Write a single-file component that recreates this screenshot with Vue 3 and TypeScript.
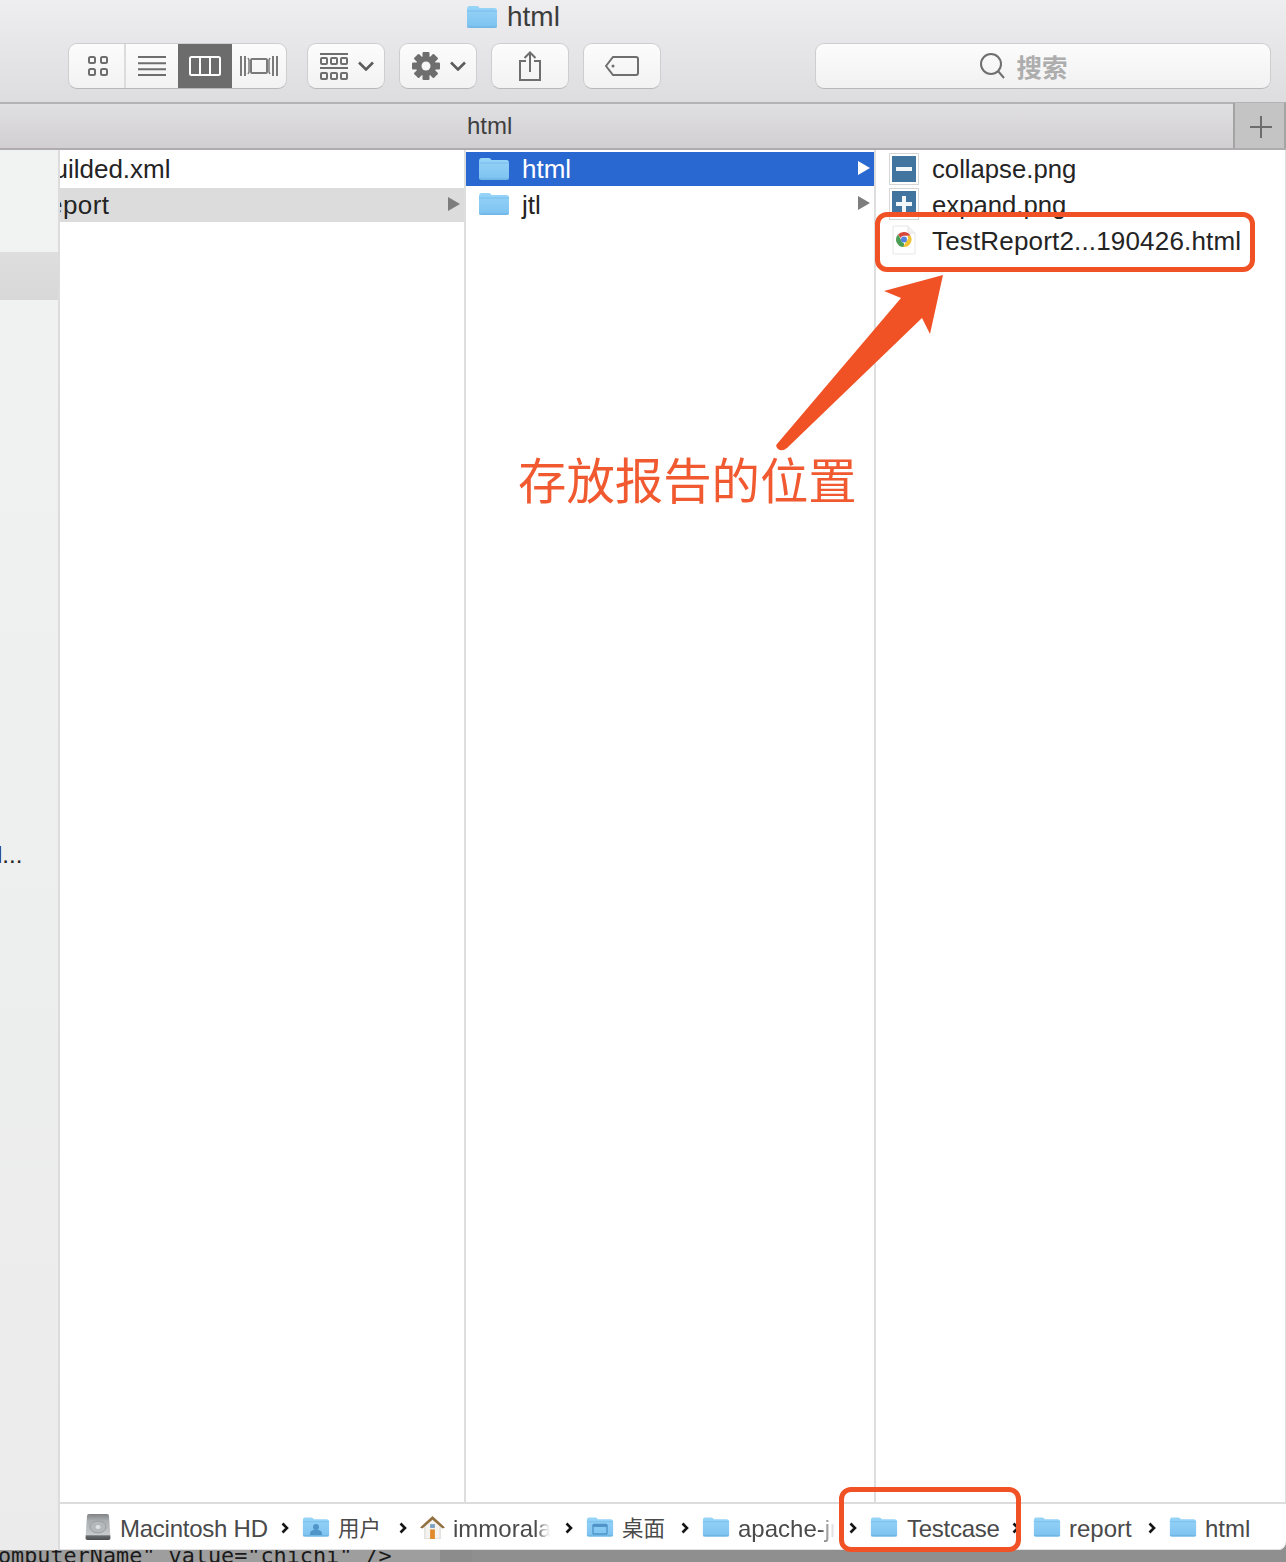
<script setup lang="ts">
interface Crumb { label: string; kind: 'hd' | 'user' | 'home' | 'desk' | 'folder'; width: number; clip?: boolean; cjk?: boolean; tight?: boolean }
const crumbs: Crumb[] = [
  { label: 'Macintosh HD', kind: 'hd', width: 217, tight: true },
  { label: '用户', kind: 'user', width: 118, cjk: true },
  { label: 'immorala', kind: 'home', width: 166, clip: true },
  { label: '桌面', kind: 'desk', width: 116, cjk: true },
  { label: 'apache-jmeter', kind: 'folder', width: 168, clip: true },
  { label: 'Testcase', kind: 'folder', width: 163, tight: true },
  { label: 'report', kind: 'folder', width: 136 },
  { label: 'html', kind: 'folder', width: 90 }
]
const gearTeeth = [0, 45, 90, 135]
</script>

<template>
  <div class="page">
    <header class="toolbar">
      <div class="title">
        <svg class="folder" width="32" height="24" viewBox="0 0 32 24"><use href="#fld" /></svg>
        <span>html</span>
      </div>
      <div class="tools">
        <div class="btn seg">
          <div class="cell c1">
            <svg width="22" height="22" viewBox="0 0 22 22" fill="none" stroke="#6e6e6e" stroke-width="2"><rect x="2" y="2" width="6" height="6" rx="1.500"/><rect x="14" y="2" width="6" height="6" rx="1.500"/><rect x="2" y="14" width="6" height="6" rx="1.500"/><rect x="14" y="14" width="6" height="6" rx="1.500"/></svg>
          </div>
          <div class="cell c2">
            <svg width="28" height="20" viewBox="0 0 28 20" stroke="#6e6e6e" stroke-width="2"><path d="M0 1h28M0 7.300h28M0 13.300h28M0 19h28"/></svg>
          </div>
          <div class="cell c3">
            <svg width="34" height="22" viewBox="0 0 34 22" fill="none" stroke="#fff" stroke-width="2"><rect x="2" y="2" width="30" height="18" rx="1.500"/><path d="M12 2v18M22 2v18"/></svg>
          </div>
          <div class="cell c4">
            <svg width="38" height="22" viewBox="0 0 38 22" fill="none" stroke="#7a7a7a" stroke-width="2"><path d="M1 1v20M5 1v20M33 1v20M37 1v20"/><rect x="11" y="4" width="16" height="14" rx="1"/><path d="M8 3l1 2v12l-1 2M30 3l-1 2v12l1 2" stroke-width="1.500"/></svg>
          </div>
        </div>
        <div class="btn b78 drop">
          <svg width="28" height="27" viewBox="0 0 28 27" fill="none" stroke="#6e6e6e" stroke-width="2"><path d="M0 1h28M0 15h28"/><rect x="1" y="5" width="6" height="6" rx="1"/><rect x="11" y="5" width="6" height="6" rx="1"/><rect x="21" y="5" width="6" height="6" rx="1"/><rect x="1" y="20" width="6" height="6" rx="1"/><rect x="11" y="20" width="6" height="6" rx="1"/><rect x="21" y="20" width="6" height="6" rx="1"/></svg>
          <svg class="chev" width="16" height="10" viewBox="0 0 16 10" fill="none" stroke="#5c5c5c" stroke-width="2.600"><path d="M1 1.500l7 7 7-7"/></svg>
        </div>
        <div class="btn b78 drop">
          <svg width="28" height="28" viewBox="0 0 28 28" fill="#6e6e6e">
            <rect v-for="a in gearTeeth" :key="a" x="10.500" y="0" width="7" height="28" rx="1" :transform="`rotate(${a} 14 14)`" />
            <circle cx="14" cy="14" r="10" />
            <circle cx="14" cy="14" r="4.500" fill="#f6f6f6" />
          </svg>
          <svg class="chev" width="16" height="10" viewBox="0 0 16 10" fill="none" stroke="#5c5c5c" stroke-width="2.600"><path d="M1 1.500l7 7 7-7"/></svg>
        </div>
        <div class="btn b78">
          <svg width="22" height="30" viewBox="0 0 22 30" fill="none" stroke="#6e6e6e" stroke-width="2"><path d="M7 10H1v19h20V10h-6"/><path d="M11 21V2M5.500 7L11 1.500 16.500 7"/></svg>
        </div>
        <div class="btn b78">
          <svg width="34" height="20" viewBox="0 0 34 20" fill="none" stroke="#6e6e6e" stroke-width="2"><path d="M8 1h23a2 2 0 0 1 2 2v14a2 2 0 0 1-2 2H8l-7-9z"/><circle cx="8" cy="10" r="1.500" fill="#6e6e6e" stroke="none"/></svg>
        </div>
        <div class="search">
          <svg width="26" height="28" viewBox="0 0 26 28" fill="none" stroke="#6f6f6f" stroke-width="2"><circle cx="11" cy="12" r="10"/><path d="M18 19l6 7"/></svg>
          <span>搜索</span>
        </div>
      </div>
    </header>

    <div class="tabbar">
      <span class="tabname">html</span>
      <div class="plus">
        <svg width="22" height="22" viewBox="0 0 22 22" stroke="#6d6d6d" stroke-width="2"><path d="M11 0v22M0 11h22"/></svg>
      </div>
    </div>

    <div class="body">
      <aside class="sidebar">
        <div class="side-sel"></div>
        <div class="side-text">l...</div>
      </aside>
      <div class="right">
        <main class="browser">
          <section class="col col1">
            <div class="row plain first"><span class="clip-l">builded.xml</span></div>
            <div class="row gray"><span class="clip-l wide">report</span><i class="tri gray-tri"></i></div>
          </section>
          <section class="col col2">
            <div class="row blue first">
              <svg class="folder" width="32" height="24" viewBox="0 0 32 24"><use href="#fld" /></svg>
              <span>html</span><i class="tri white-tri"></i>
            </div>
            <div class="row plain">
              <svg class="folder" width="32" height="24" viewBox="0 0 32 24"><use href="#fld" /></svg>
              <span>jtl</span><i class="tri gray-tri"></i>
            </div>
          </section>
          <section class="col col3">
            <div class="row plain first">
              <div class="png"><i class="hbar"></i></div>
              <span class="fname">collapse.png</span>
            </div>
            <div class="row plain">
              <div class="png"><i class="hbar"></i><i class="vbar"></i></div>
              <span class="fname">expand.png</span>
            </div>
            <div class="row plain">
              <svg class="doc" width="24" height="30" viewBox="0 0 24 30">
                <path d="M1 1h15l7 7v21H1z" fill="#fff" stroke="#e6e6e6"/>
                <path d="M16 1v7h7" fill="#f2f2f2" stroke="#e6e6e6"/>
                <path d="M12 7a7.500 7.500 0 0 1 6.500 3.750H12a3.750 3.750 0 0 0-3.400 2.200L6 9.500A7.500 7.500 0 0 1 12 7z" fill="#d8473c"/>
                <path d="M6 9.500l3.300 5.700a3.750 3.750 0 0 0 2.700 3.300V22A7.500 7.500 0 0 1 6 9.500z" fill="#4a9d55"/>
                <path d="M18.500 10.750A7.500 7.500 0 0 1 11 21.900l3.300-5.700a3.750 3.750 0 0 0 .9-5.450z" fill="#f1c232"/>
                <circle cx="12" cy="14.500" r="3" fill="#5283e0"/>
              </svg>
              <span class="long">TestReport2...190426.html</span>
            </div>
          </section>
        </main>

        <footer class="pathbar">
          <div v-for="(c, i) in crumbs" :key="i" class="crumb" :style="{ width: c.width + 'px' }">
            <svg v-if="c.kind === 'hd'" class="ci" width="26" height="28" viewBox="0 0 26 28">
              <defs><linearGradient id="hdg" x1="0" y1="0" x2="0" y2="1"><stop offset="0" stop-color="#7f8386"/><stop offset="0.25" stop-color="#a9adaf"/><stop offset="0.82" stop-color="#c9cbcd"/><stop offset="0.83" stop-color="#6a6d6f"/><stop offset="1" stop-color="#4d5052"/></linearGradient></defs>
              <path d="M4 1h18q2 0 2 2l1.500 22q0 2-2 2h-21q-2 0-2-2L2 3q0-2 2-2z" fill="url(#hdg)"/>
              <ellipse cx="13" cy="14" rx="8" ry="6" fill="#b4b8ba" stroke="#9b9ea0"/>
              <ellipse cx="13" cy="14" rx="2.500" ry="2" fill="#dfe1e2"/>
            </svg>
            <svg v-else-if="c.kind === 'home'" class="ci" width="25" height="24" viewBox="0 0 26 25">
              <path d="M5 11v14h16V11L13 4z" fill="#f4f3ef" stroke="#bbb" stroke-width="0.600"/>
              <path d="M0 13L13 1l13 12-2.500 1L13 5 2.500 14z" fill="#93703f"/>
              <rect x="10.500" y="15" width="5" height="10" fill="#e08a2c"/>
              <rect x="10.500" y="9.500" width="5" height="4" fill="#7da0c0"/>
            </svg>
            <svg v-else class="folder ci" width="28" height="22" viewBox="0 0 32 24">
              <use href="#fld" />
              <g v-if="c.kind === 'user'" fill="#4f95c8"><circle cx="16" cy="12" r="3.500"/><path d="M9 21c0-5 3-6 7-6s7 1 7 6z"/></g>
              <rect v-if="c.kind === 'desk'" x="8" y="9" width="16" height="11" rx="1" fill="none" stroke="#4f95c8" stroke-width="1.600"/>
              <rect v-if="c.kind === 'desk'" x="8" y="9" width="16" height="3" fill="#4f95c8"/>
            </svg>
            <span class="clabel" :class="{ fade: c.clip, cjk: c.cjk, tight: c.tight }">{{ c.label }}</span>
            <svg v-if="i < crumbs.length - 1" class="sep" width="8" height="12" viewBox="0 0 8 12" fill="none" stroke="#141414" stroke-width="2.600"><path d="M1.500 1.500L6 6l-4.500 4.500"/></svg>
          </div>
        </footer>
      </div>
    </div>

    <div class="under">
      <span class="code">omputerName" value="chichi" /&gt;</span>
    </div>

    <div class="mark mark-file"></div>
    <div class="mark mark-crumb"></div>
    <svg class="arrow" width="180" height="190" viewBox="0 0 180 190">
      <path fill="#f15225" d="M168 3L155 62 147 46 12 176Q7 180 3 177 0 174 2 172L126 26 109 19z"/>
    </svg>
    <div class="note">存放报告的位置</div>

    <svg width="0" height="0" class="defs">
      <defs>
        <linearGradient id="fg" x1="0" y1="0" x2="0" y2="1"><stop offset="0" stop-color="#97d4f8"/><stop offset="1" stop-color="#7cc2f0"/></linearGradient>
        <g id="fld">
          <path d="M1 4.500Q1 1 3.500 1H11q1.500 0 2.500 2h15Q31 3 31 6v15q0 2-2.500 2h-25Q1 23 1 21z" fill="url(#fg)"/>
          <path d="M1 6h30" stroke="#6fb6e8" stroke-width="1" opacity="0.700"/>
          <path d="M1 22h30" stroke="#5ca2d4" stroke-width="1" opacity="0.600"/>
        </g>
      </defs>
    </svg>
  </div>
</template>

<style scoped>
.page {
  position: relative;
  width: 1286px;
  height: 1562px;
  overflow: hidden;
  font-family: "Liberation Sans", Arial, "Noto Sans CJK SC", sans-serif;
  font-size: 26px;
  color: #242424;
  background: #fff;
}
.toolbar {
  box-sizing: border-box;
  height: 104px;
  background: linear-gradient(#eeedef, #dddcde);
  border-bottom: 2px solid #b4b2b4;
}
.title {
  height: 33px;
  display: flex;
  align-items: center;
  gap: 9px;
  padding-left: 466px;
  font-size: 28px;
  color: #3c3c3c;
}
.tools {
  display: flex;
  padding: 10px 15px 0 68px;
  align-items: flex-start;
}
.btn {
  box-sizing: border-box;
  height: 46px;
  background: linear-gradient(#fcfcfc, #f2f2f2);
  border: 1px solid #cfcdcf;
  border-bottom-color: #b9b7b9;
  border-radius: 9px;
  display: flex;
  align-items: center;
  justify-content: center;
  flex: none;
  margin-right: 14px;
}
.seg { width: 219px; overflow: hidden; justify-content: flex-start; margin-right: 20px; }
.cell { height: 100%; display: flex; align-items: center; justify-content: center; flex: none; }
.c1 { width: 55px; border-right: 2px solid #dcdcdc; padding-left: 3px; box-sizing: border-box; width: 57px; }
.c2 { width: 52px; }
.c3 { width: 54px; background: #6c6c6c; padding-right: 1px; box-sizing: border-box; }
.c4 { width: 54px; }
.b78 { width: 78px; gap: 10px; }
.drop { padding-left: 2px; }
.search {
  box-sizing: border-box;
  flex: none;
  width: 456px;
  height: 46px;
  margin-left: 140px;
  padding-right: 38px;
  background: linear-gradient(#fcfcfc, #f1f1f1);
  border: 1px solid #cfcdcf;
  border-bottom-color: #b9b7b9;
  border-radius: 9px;
  display: flex;
  align-items: center;
  justify-content: center;
  gap: 10px;
  font-size: 25.500px;
  line-height: 30px;
  color: #adadad;
  font-family: "Noto Sans CJK SC", sans-serif;
  font-weight: 700;
}
.tabbar {
  box-sizing: border-box;
  height: 46px;
  background: linear-gradient(#e0dfe1, #d1cfd2);
  border-bottom: 2px solid #aeacae;
  position: relative;
  display: flex;
  align-items: center;
  padding-left: 467px;
  font-size: 24px;
  color: #3f3f3f;
}
.plus {
  position: absolute;
  right: 0;
  top: -1px;
  width: 53px;
  height: 45px;
  box-sizing: border-box;
  padding: 2px 0 0 3px;
  background: #c4c4c5;
  border-left: 2px solid #a4a3a4;
  border-right: 2px solid #a4a3a4;
  display: flex;
  align-items: center;
  justify-content: center;
}
.body {
  display: flex;
  height: 1400px;
  background: #8f8f8f;
}
.sidebar {
  box-sizing: border-box;
  width: 60px;
  flex: none;
  position: relative;
  background: linear-gradient(#f1f2f2, #ebebeb);
  border-right: 2px solid #dcdcdc;
}
.side-sel { position: absolute; left: 0; top: 102px; width: 58px; height: 48px; background: linear-gradient(#dedede, #d8d8d8); }
.side-text { position: absolute; left: -3px; top: 691px; font-size: 24px; line-height: 28px; }
.right { flex: 1; display: flex; flex-direction: column; min-width: 0; }
.browser {
  flex: 1;
  display: flex;
  background: #fff;
  min-height: 0;
}
.col { box-sizing: border-box; flex: none; padding-top: 2px; border-right: 2px solid #dedede; }
.col1 { width: 406px; }
.col2 { width: 410px; }
.col3 { flex: 1; border-right: 1px solid #dedede; }
.row {
  position: relative;
  height: 36px;
  display: flex;
  align-items: center;
  gap: 12px;
  padding: 0 0 0 12px;
  white-space: nowrap;
  overflow: hidden;
}
.row.first { height: 34px; }
.row span { position: relative; top: 1px; }
.row.first span { top: 0; }
.col1 .row { padding-left: 0; }
.col1 .gray { height: 34px; margin-top: 2px; background: #dcdcdc; }
.col1 .gray span { top: 0; }
.clip-l { display: block; margin-left: -21px; flex: none; }
.clip-l.wide { letter-spacing: 0.400px; }
.blue { background: #2a68d1; color: #fff; }
.tri { position: absolute; right: 4px; top: 50%; margin-top: -8px; width: 0; height: 0; border-left: 12px solid #7d7d7d; border-top: 7px solid transparent; border-bottom: 7px solid transparent; }
.white-tri { border-left-color: #fff; margin-top: -8px; }
.col3 .row { gap: 14px; padding-left: 14px; }
.png {
  box-sizing: border-box;
  position: relative;
  width: 28px;
  height: 30px;
  flex: none;
  background: #41749f;
  border: 2px solid #fff;
  outline: 1px solid #d6d6d6;
}
.hbar { position: absolute; left: 4px; right: 4px; top: 11px; height: 4px; background: #f3f6f9; }
.vbar { position: absolute; left: 10px; width: 4px; top: 5px; bottom: 5px; background: #f3f6f9; }
.doc { flex: none; margin-left: 2px; margin-right: 2px; }
.fname { font-size: 25.700px; }
.long { letter-spacing: 0.170px; }
.pathbar {
  box-sizing: border-box;
  flex: none;
  height: 48px;
  background: #fff;
  border-top: 2px solid #dcdcdc;
  border-bottom-right-radius: 8px;
  display: flex;
  align-items: center;
  padding-left: 25px;
  box-shadow: inset 0 -1px 0 #e2e2e2;
  font-size: 24px;
  color: #4a4a4a;
  position: relative;
}
.crumb { flex: none; display: flex; align-items: center; gap: 8px; position: relative; white-space: nowrap; overflow: hidden; box-sizing: border-box; height: 100%; }
.clabel { flex: none; line-height: 28px; position: relative; top: 2px; }
.tight { letter-spacing: -0.250px; margin-left: 1px; }
.cjk { font-family: "Noto Sans CJK SC", sans-serif; font-size: 21.500px; top: 0; }
.ci { flex: none; }
.fade { width: 97px; overflow: hidden; -webkit-mask-image: linear-gradient(90deg, #000 85%, transparent); mask-image: linear-gradient(90deg, #000 85%, transparent); }
.sep { position: absolute; right: 13px; top: 18px; }
.under {
  position: relative;
  height: 12px;
  background: linear-gradient(90deg, #9e9e9e 0 440px, #8c8c8c 440px 472px, #8f8f8f 472px);
  overflow: hidden;
}
.code { position: absolute; left: -2px; top: -8px; font-family: "DejaVu Sans Mono", monospace; font-size: 21.800px; color: #1a1a1a; line-height: 28px; white-space: pre; }
.mark { position: absolute; box-sizing: border-box; border: 5px solid #f15225; border-radius: 12px; }
.mark-file { left: 875px; top: 212px; width: 380px; height: 60px; }
.mark-crumb { left: 839px; top: 1487px; width: 182px; height: 65px; }
.arrow { position: absolute; left: 775px; top: 272px; }
.note { position: absolute; left: 518px; top: 449px; font-family: "Noto Sans CJK SC", sans-serif; font-size: 48.400px; line-height: 58px; color: #f15a30; font-weight: 400; white-space: nowrap; }
.defs { position: absolute; }
</style>
